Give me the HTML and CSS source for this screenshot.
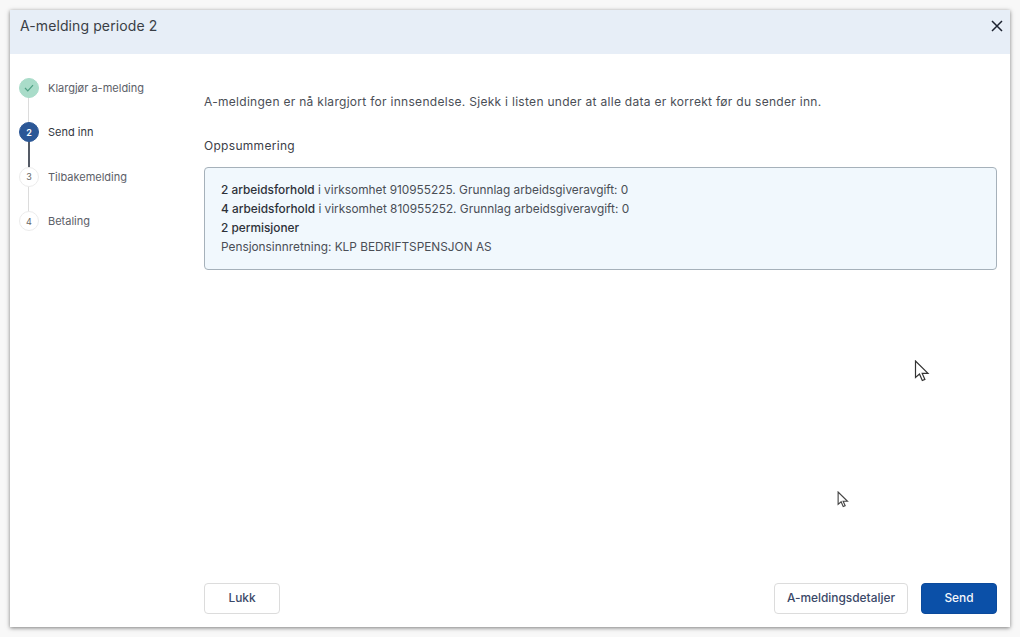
FILE: index.html
```html
<!DOCTYPE html>
<html lang="no">
<head>
<meta charset="utf-8">
<title>A-melding periode 2</title>
<link rel="stylesheet" href="styles.css">
</head>
<body>
<div class="modal">
  <header class="head">
    <h1 class="title">A-melding periode 2</h1>
    <svg class="close" width="12" height="12" viewBox="0 0 12 12"><path d="M1 1l10 10M11 1L1 11" stroke="#1c2230" stroke-width="1.5" fill="none"/></svg>
  </header>
  <div class="main">
    <ol class="steps">
      <li class="step done"><span class="dot"><svg width="10" height="8" viewBox="0 0 10 8"><path d="M1 4l2.8 2.8L9 1.2" stroke="#4e9f83" stroke-width="1.2" fill="none"/></svg></span><span class="label">Klargjør a-melding</span></li>
      <li class="step active"><span class="dot">2</span><span class="label">Send inn</span></li>
      <li class="step"><span class="dot">3</span><span class="label">Tilbakemelding</span></li>
      <li class="step last"><span class="dot">4</span><span class="label">Betaling</span></li>
    </ol>
    <section class="content">
      <p class="intro">A-meldingen er nå klargjort for innsendelse. Sjekk i listen under at alle data er korrekt før du sender inn.</p>
      <h2 class="sub">Oppsummering</h2>
      <div class="summary">
        <p><span class="em">2 arbeidsforhold</span> i virksomhet 910955225. Grunnlag arbeidsgiveravgift: 0</p>
        <p><span class="em">4 arbeidsforhold</span> i virksomhet 810955252. Grunnlag arbeidsgiveravgift: 0</p>
        <p><span class="em">2 permisjoner</span></p>
        <p>Pensjonsinnretning: KLP BEDRIFTSPENSJON AS</p>
      </div>
      <div class="actions">
        <button class="btn wide-lukk">Lukk</button>
        <div class="right">
          <button class="btn">A-meldingsdetaljer</button>
          <button class="btn primary">Send</button>
        </div>
      </div>
    </section>
  </div>
</div>
<svg class="cursor big" width="16" height="22" viewBox="0 0 16 22"><path d="M1.5 1v16.5l4-3.5 2.8 6.5 2.6-1.1L8.2 13.4H14z" fill="#fff" stroke="#333" stroke-width="1.2"/></svg>
<svg class="cursor small" width="12" height="17" viewBox="0 0 16 22"><path d="M1.5 1v16.5l4-3.5 2.8 6.5 2.6-1.1L8.2 13.4H14z" fill="#fff" stroke="#444" stroke-width="1.5"/></svg>
</body>
</html>
```
FILE: styles.css
```css
* { box-sizing: border-box; }
html, body { height: 100%; }
body {
  margin: 0;
  padding: 10px;
  background: #f8f8f8;
  font-family: Inter, "Liberation Sans", sans-serif;
  color: #2b2f38;
  overflow: hidden;
}
.modal {
  height: 617px;
  background: #fff;
  display: flex;
  flex-direction: column;
  box-shadow: 0 1px 4px rgba(0,0,0,.5);
}
.head {
  height: 44px;
  flex: none;
  background: #e7eef7;
  display: flex;
  align-items: center;
  justify-content: space-between;
  padding: 0 7px 13px 10px;
}
.title { margin: 0; font-size: 14px; font-weight: 400; color: #3a3e46; letter-spacing: .1px; }
.main { flex: 1; display: flex; min-height: 0; }
.steps {
  list-style: none;
  margin: 0;
  padding: 24px 0 0 9px;
  width: 194px;
  flex: none;
}
.step {
  display: flex;
  gap: 9px;
  height: 44.4px;
  font-size: 11px;
  color: #5c6068;
  position: relative;
}
.step .label { line-height: 21px; }
.step::before {
  content: "";
  position: absolute;
  left: 9px;
  top: 18px;
  bottom: -2px;
  width: 1px;
  background: #dcdcdc;
}
.step.active::before { background: #555b66; width: 2px; }
.step.last::before { display: none; }
.dot {
  width: 20px;
  height: 20px;
  flex: none;
  border-radius: 50%;
  background: #fff;
  border: 1px solid #ececec;
  display: flex;
  align-items: center;
  justify-content: center;
  font-size: 9px;
  color: #666;
  position: relative;
  z-index: 1;
}
.done .dot { background: #a9dcc9; border-color: #a9dcc9; }
.active .dot { background: #2b5796; border-color: #2b5796; color: #fff; font-weight: 600; }
.active .label { color: #33373f; }
.content { flex: 1; display: flex; flex-direction: column; padding: 0 13px 13px 0; }
.intro { margin: 40px 0 0; font-size: 12px; line-height: 16px; letter-spacing: .29px; color: #4a4e56; }
.sub { margin: 28px 0 0; font-size: 12px; line-height: 16px; font-weight: 400; letter-spacing: .3px; color: #3c4048; }
.summary {
  margin-top: 13px;
  height: 103px;
  padding: 13px 16px;
  background: #f1f8fd;
  border: 1px solid #a6b1ba;
  border-radius: 4px;
  font-size: 11.85px;
  line-height: 18.9px;
  color: #4a4e56;
}
.summary p { margin: 0; }
.em { color: #2d3139; font-weight: 450; }
.actions { margin-top: auto; display: flex; justify-content: space-between; }
.right { display: flex; gap: 13px; }
.btn {
  height: 31px;
  padding: 0 12px 2px;
  background: #fff;
  border: 1px solid #dcdcdc;
  border-radius: 4px;
  font: 450 11.9px Inter, "Liberation Sans", sans-serif;
  color: #3a4868;
}
.wide-lukk { width: 76px; }
.primary { width: 76px; background: #0b50a8; border-color: #0b4a9c; color: #f4f7fb; font-weight: 500; }
.cursor { position: absolute; }
.big { left: 914px; top: 360px; }
.small { left: 837px; top: 491px; }
```
